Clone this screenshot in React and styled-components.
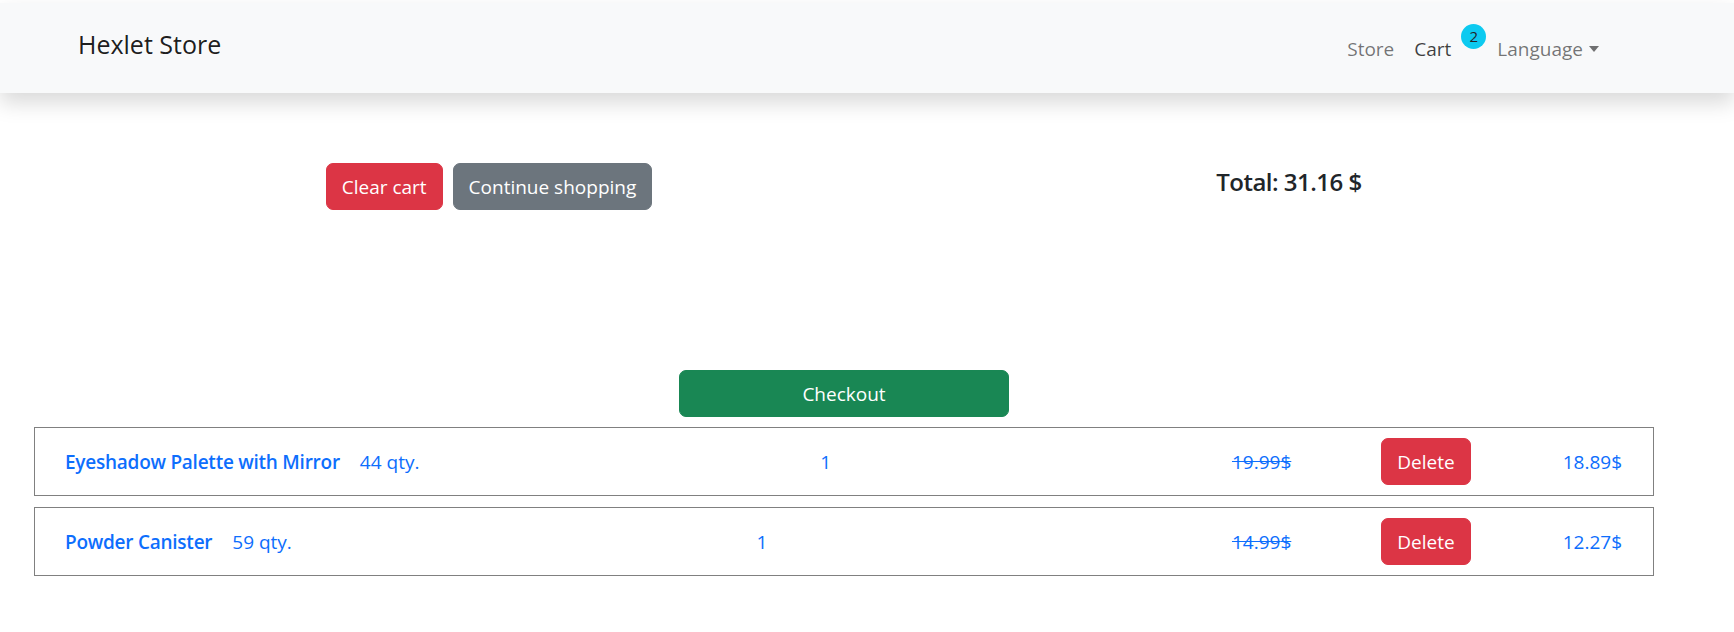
import React from 'react';
import styled, { createGlobalStyle } from 'styled-components';

const GlobalStyle = createGlobalStyle`
  body {
    margin: 0;
    background: #fff;
    font-family: "Open Sans", "Noto Sans", sans-serif;
    color: #212529;
  }
`;

const Page = styled.div`
  padding-top: 3px;
  min-height: 629px;
`;

const Navbar = styled.nav`
  display: flex;
  justify-content: space-between;
  align-items: flex-start;
  height: 90px;
  padding: 0 125px 0 78px;
  background: #f8f9fa;
  box-shadow: 0 10px 20px rgba(0, 0, 0, 0.15);
`;

const Brand = styled.a`
  padding-top: 23px;
  font-size: 25px;
  line-height: 36px;
  color: rgba(0, 0, 0, 0.9);
  text-decoration: none;
`;

const NavList = styled.div`
  display: flex;
  align-items: center;
  margin-top: 31px;
`;

const NavLink = styled.a`
  display: flex;
  align-items: center;
  padding: 0 10px;
  font-size: 19px;
  line-height: 30px;
  color: ${({ active }) => (active ? 'rgba(0, 0, 0, 0.75)' : 'rgba(0, 0, 0, 0.55)')};
  text-decoration: none;
`;

// the badge hangs over the link's right padding
const Badge = styled.span`
  position: relative;
  top: -13px;
  display: inline-flex;
  align-items: center;
  justify-content: center;
  width: 25px;
  height: 25px;
  margin: 0 -9px 0 10px;
  border-radius: 50%;
  background: #0dcaf0;
  color: #212529;
  font-size: 15px;
  line-height: 1;
`;

const Caret = styled.span`
  display: inline-block;
  margin-left: 6px;
  border-top: 6px solid rgba(0, 0, 0, 0.55);
  border-left: 5px solid transparent;
  border-right: 5px solid transparent;
`;

const Main = styled.main`
  padding: 0 80px 0 34px;
`;

const Summary = styled.section`
  display: grid;
  grid-template-columns: 1fr 1fr;
  align-items: start;
  width: 1600px;
  margin: 70px 0 0 55px;
  text-align: center;
`;

const Actions = styled.div`
  display: flex;
  justify-content: center;
  gap: 10px;
`;

const Button = styled.button`
  padding: 7.5px 15px;
  width: ${({ wide }) => (wide ? '330px' : 'auto')};
  border: 1px solid ${({ color }) => color};
  border-radius: 7px;
  background: ${({ color }) => color};
  color: #fff;
  font-family: inherit;
  font-size: 19px;
  line-height: 30px;
  cursor: pointer;
`;

const Total = styled.h5`
  margin: 0;
  padding-top: 4px;
  font-size: 24px;
  font-weight: 600;
  letter-spacing: -0.5px;
  line-height: 30px;
`;

const CheckoutRow = styled.div`
  display: flex;
  justify-content: center;
  margin-top: 160px;
`;

const List = styled.ul`
  display: flex;
  flex-direction: column;
  gap: 11px;
  margin: 10px 0 0;
  padding: 0;
  list-style: none;
`;

const Item = styled.li`
  display: flex;
  align-items: center;
  padding: 10px 31px 10px 30px;
  border: 1px solid #808080;
  color: #0d6efd;
  font-size: 19px;
  line-height: 30px;
`;

const Name = styled.a`
  color: #0d6efd;
  font-weight: 600;
  letter-spacing: -0.25px;
  text-decoration: none;
`;

const Stock = styled.span`
  margin-left: 20px;
`;

const Count = styled.span`
  flex: 1;
  text-align: center;
`;

const OldPrice = styled.s`
  margin-right: 90px;
`;

const NewPrice = styled.span`
  margin-left: 92px;
`;

const items = [
  { name: 'Eyeshadow Palette with Mirror', stock: 44, count: 1, oldPrice: '19.99', price: '18.89' },
  { name: 'Powder Canister', stock: 59, count: 1, oldPrice: '14.99', price: '12.27' },
];

const App = () => (
  <Page>
    <GlobalStyle />
    <Navbar>
      <Brand href="#">Hexlet Store</Brand>
      <NavList>
        <NavLink href="#">Store</NavLink>
        <NavLink href="#" active>
          Cart
          <Badge>2</Badge>
        </NavLink>
        <NavLink href="#">
          Language
          <Caret />
        </NavLink>
      </NavList>
    </Navbar>
    <Main>
      <Summary>
        <Actions>
          <Button color="#dc3545">Clear cart</Button>
          <Button color="#6c757d">Continue shopping</Button>
        </Actions>
        <Total>Total: 31.16 $</Total>
      </Summary>
      <CheckoutRow>
        <Button color="#198754" wide>Checkout</Button>
      </CheckoutRow>
      <List>
        {items.map((item) => (
          <Item key={item.name}>
            <Name href="#">{item.name}</Name>
            <Stock>{item.stock} qty.</Stock>
            <Count>{item.count}</Count>
            <OldPrice>{item.oldPrice}$</OldPrice>
            <Button color="#dc3545">Delete</Button>
            <NewPrice>{item.price}$</NewPrice>
          </Item>
        ))}
      </List>
    </Main>
  </Page>
);

export default App;
